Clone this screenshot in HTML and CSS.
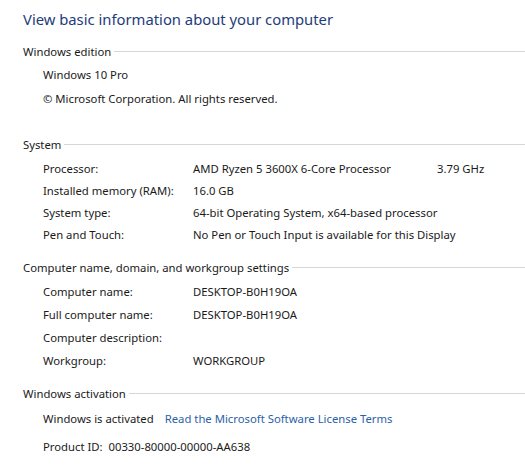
FILE: index.html
```html
<!DOCTYPE html>
<html lang="en">
<head>
  <meta charset="UTF-8">
  <title>System</title>
  <link rel="stylesheet" href="styles.css">
</head>
<body>
  <h1 class="page-title">View basic information about your computer</h1>

  <!-- Windows edition -->
  <section class="group edition">
    <div class="group-header"><span>Windows edition</span></div>
    <div class="line">Windows 10 Pro</div>
    <div class="line">© Microsoft Corporation. All rights reserved.</div>
  </section>

  <!-- System -->
  <section class="group system">
    <div class="group-header"><span>System</span></div>
    <div class="row">
      <div class="label">Processor:</div>
      <div class="value cpu"><span class="cpu-name">AMD Ryzen 5 3600X 6-Core Processor</span><span>3.79 GHz</span></div>
    </div>
    <div class="row">
      <div class="label">Installed memory (RAM):</div>
      <div class="value">16.0 GB</div>
    </div>
    <div class="row">
      <div class="label">System type:</div>
      <div class="value">64-bit Operating System, x64-based processor</div>
    </div>
    <div class="row">
      <div class="label">Pen and Touch:</div>
      <div class="value">No Pen or Touch Input is available for this Display</div>
    </div>
  </section>

  <!-- Computer name -->
  <section class="group computer">
    <div class="group-header"><span>Computer name, domain, and workgroup settings</span></div>
    <div class="row">
      <div class="label">Computer name:</div>
      <div class="value">DESKTOP-B0H19OA</div>
    </div>
    <div class="row">
      <div class="label">Full computer name:</div>
      <div class="value">DESKTOP-B0H19OA</div>
    </div>
    <div class="row">
      <div class="label">Computer description:</div>
      <div class="value"></div>
    </div>
    <div class="row">
      <div class="label">Workgroup:</div>
      <div class="value">WORKGROUP</div>
    </div>
  </section>

  <!-- Activation -->
  <section class="group activation">
    <div class="group-header"><span>Windows activation</span></div>
    <div class="line activated">Windows is activated<a href="#" class="license-link">Read the Microsoft Software License Terms</a></div>
    <div class="line product">Product ID:&nbsp; 00330-80000-00000-AA638</div>
  </section>
</body>
</html>
```

FILE: styles.css
```css
:root {
  --text-color: #1a1a1a;
  --title-color: #1e3c7a;
  --link-color: #2b5fa9;
  --rule-color: #d6d6d6;
}

* {
  margin: 0;
  padding: 0;
  box-sizing: border-box;
}

body {
  font-family: "Noto Sans", "Open Sans", sans-serif;
  font-size: 11.3px;
  color: var(--text-color);
  background-color: #ffffff;
  padding: 8px 0 0 23px;
}

.page-title {
  font-size: 14.8px;
  font-weight: 400;
  color: var(--title-color);
  line-height: 22px;
  height: 22px;
}

/* Groups */
.group-header {
  display: flex;
  align-items: center;
  height: 22px;
}

.group-header::after {
  content: '';
  flex: 1;
  height: 1px;
  background-color: var(--rule-color);
  margin-left: 3px;
  margin-top: 1px;
}

.line,
.row {
  padding-left: 20px;
  line-height: 23px;
  height: 23px;
}

.row {
  display: grid;
  grid-template-columns: 150px 1fr;
}

.cpu {
  display: flex;
}

.cpu-name {
  width: 244px;
}

/* Windows edition */
.edition {
  margin-top: 10px;
}

.edition .group-header {
  margin-bottom: 1px;
}

.edition .line {
  height: 24px;
  line-height: 24px;
}

/* System */
.system {
  margin-top: 22px;
}

.system .group-header {
  margin-bottom: 3px;
}

.system .row {
  height: 22px;
  line-height: 22px;
}

/* Computer name */
.computer {
  margin-top: 10px;
}

.computer .group-header {
  margin-bottom: 1.5px;
}

/* Activation */
.activation {
  margin-top: 10.5px;
}

.activation .line {
  height: 22px;
  line-height: 22px;
}

.activated {
  margin-top: 4px;
}

.product {
  margin-top: 6px;
}

.license-link {
  color: var(--link-color);
  text-decoration: none;
  margin-left: 11px;
}
```
